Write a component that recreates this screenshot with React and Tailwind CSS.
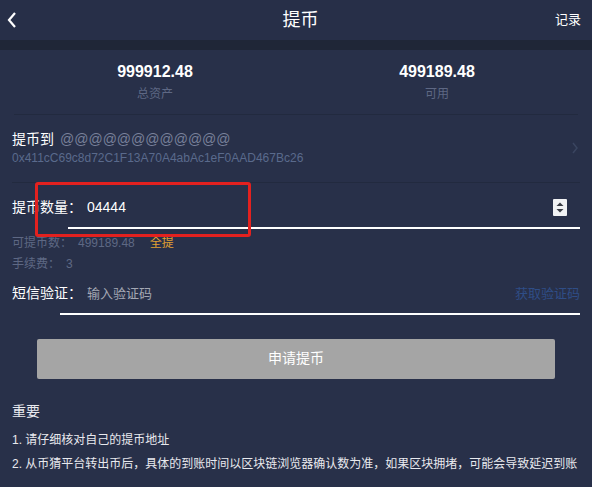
import React, { useState } from "react";

const font = { fontFamily: '"Liberation Sans", "Noto Sans CJK SC", sans-serif' };

function Stepper() {
  return (
    <svg width="14" height="17" viewBox="0 0 14 17" className="shrink-0">
      <rect x="0" y="0" width="14" height="17" rx="1" fill="#f1f2f4" />
      <path d="M3.5 7 L7 3.5 L10.5 7 Z" fill="#3a3d45" />
      <path d="M3.5 10 L7 13.5 L10.5 10 Z" fill="#3a3d45" />
    </svg>
  );
}

export default function App() {
  const [amount, setAmount] = useState("04444");
  const [code, setCode] = useState("");

  return (
    <div
      className="w-[592px] h-[487px] bg-[#283049] text-white overflow-hidden relative"
      style={font}
    >
      {/* header */}
      <div className="h-[40px] flex items-center justify-between px-[6px] bg-[#272f48]">
        <svg width="12" height="18" viewBox="0 0 12 18">
          <path d="M9 2 L3 9 L9 16" stroke="#fff" strokeWidth="2.2" fill="none" />
        </svg>
        <div className="text-[18px] ml-[28px]">提币</div>
        <div className="text-[13px] pr-[5px]">记录</div>
      </div>
      <div className="h-[10px] bg-[#1f2637]" />

      {/* stats */}
      <div className="mx-[14px] flex border-b border-[#222a3f] pt-[12px] pb-[12px]">
        <div className="flex-1 flex flex-col items-center">
          <div className="text-[16px] font-bold leading-[20px]">999912.48</div>
          <div className="text-[12px] text-[#5e6884] mt-[4px] leading-[16px]">总资产</div>
        </div>
        <div className="flex-1 flex flex-col items-center">
          <div className="text-[16px] font-bold leading-[20px]">499189.48</div>
          <div className="text-[12px] text-[#5e6884] mt-[4px] leading-[16px]">可用</div>
        </div>
      </div>

      {/* address */}
      <div className="mx-[12px] flex items-center border-b border-[#222a3f] pt-[15px] pb-[16px]">
        <div className="flex-1">
          <div className="flex items-center gap-[6px] leading-[18px]">
            <span className="text-[14px]">提币到</span>
            <span className="text-[14px] text-[#78809a]">@@@@@@@@@@@@</span>
          </div>
          <div className="text-[12px] text-[#5a6a8c] leading-[16px] mt-[2px]">
            0x411cC69c8d72C1F13A70A4abAc1eF0AAD467Bc26
          </div>
        </div>
        <svg width="8" height="12" viewBox="0 0 8 12" className="mr-[1px]">
          <path d="M2 1 L6 6 L2 11" stroke="#3a4560" strokeWidth="1.5" fill="none" />
        </svg>
      </div>

      {/* amount */}
      <div className="mx-[12px] flex items-start pt-[11px]">
        <span className="text-[14px] w-[56px] shrink-0 whitespace-nowrap mt-[4px] leading-[18px]">提币数量：</span>
        <div className="flex-1 flex items-center border-b-2 border-white pb-[11px] pt-[4px]">
          <input
            value={amount}
            onChange={(e) => setAmount(e.target.value)}
            className="flex-1 bg-transparent outline-none text-[14px] text-white pl-[19px] leading-[18px]"
            style={font}
          />
          <div className="mr-[13px]"><Stepper /></div>
        </div>
      </div>

      <div className="ml-[12px] mt-[5px] text-[12px] text-[#5e6884] leading-[18px]">
        <div className="flex">
          <span>可提币数：</span>
          <span className="ml-[6px]">499189.48</span>
          <span className="ml-[15px] text-[#e0a032]">全提</span>
        </div>
        <div className="flex mt-[3px]">
          <span>手续费：</span>
          <span className="ml-[6px]">3</span>
        </div>
      </div>

      {/* sms */}
      <div className="mx-[12px] flex items-start mt-[9px]">
        <span className="text-[14px] w-[48px] shrink-0 whitespace-nowrap pt-[2px] leading-[18px]">短信验证：</span>
        <div className="flex-1 flex items-center border-b-2 border-white pb-[9px] pt-[2px]">
          <input
            value={code}
            onChange={(e) => setCode(e.target.value)}
            placeholder="输入验证码"
            className="flex-1 bg-transparent outline-none text-[13px] text-white placeholder:text-[#a3a7b3] pl-[27px] leading-[18px]"
            style={font}
          />
          <span className="text-[13px] text-[#2f4d86]">获取验证码</span>
        </div>
      </div>

      <div className="px-[37px] mt-[24px]">
        <button
          className="w-full h-[40px] bg-[#a5a5a5] rounded-[2px] text-[14px] text-white"
          style={font}
        >
          申请提币
        </button>
      </div>

      <div className="px-[12px] mt-[23px]">
        <div className="text-[14px] leading-[18px] text-[#e8e9ee]">重要</div>
        <div className="text-[12px] leading-[16px] mt-[12px] text-[#e8e9ee]">1. 请仔细核对自己的提币地址</div>
        <div className="text-[12px] leading-[16px] mt-[8px] text-[#e8e9ee] whitespace-nowrap">
          2. 从币猜平台转出币后，具体的到账时间以区块链浏览器确认数为准，如果区块拥堵，可能会导致延迟到账
        </div>
      </div>

      {/* annotation box */}
      <div className="absolute left-[35px] top-[182px] w-[216px] h-[55px] border-[3px] border-[#e3211f] rounded-[3px] pointer-events-none" />
    </div>
  );
}
